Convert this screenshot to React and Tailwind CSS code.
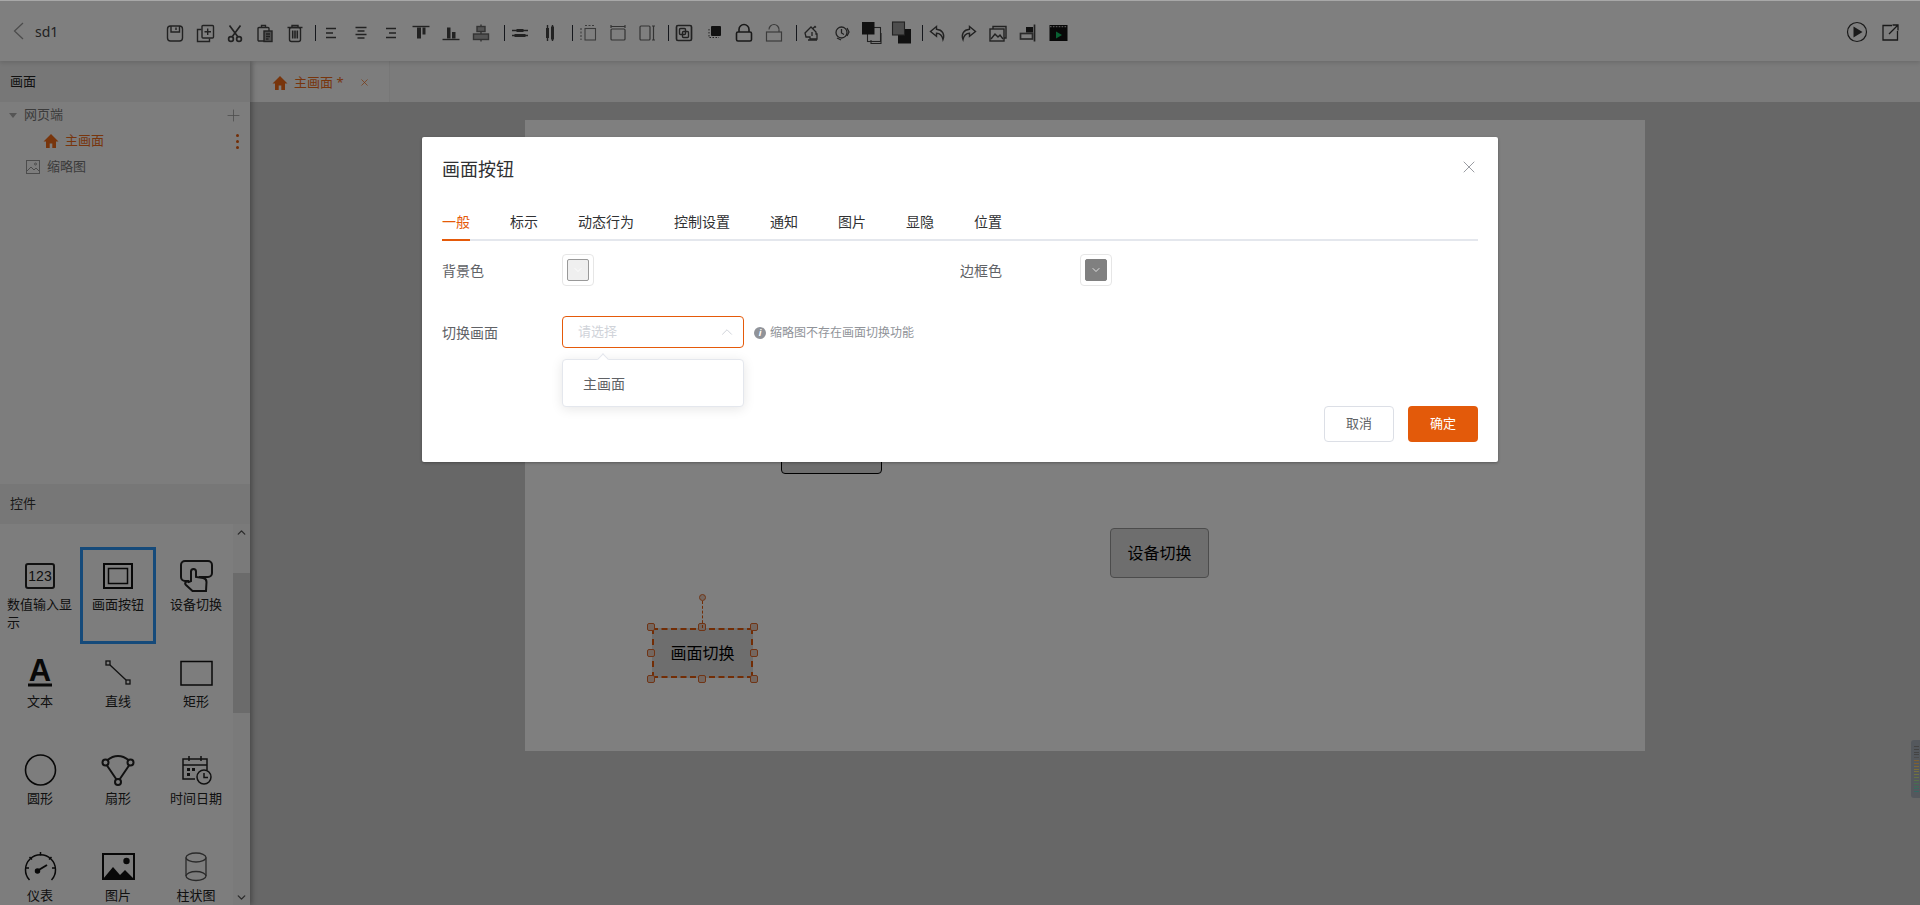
// Screen editor page with the 画面按钮 dialog open
import { ChevronUp, ChevronDown, Plus, X } from "lucide-react";

const S = ({ children, w = 20, h = 20, vb = "0 0 20 20", sw = 1.4, className = "" }) => (
  <svg width={w} height={h} viewBox={vb} fill="none" stroke="currentColor" strokeWidth={sw} className={className}>
    {children}
  </svg>
);

// toolbar drawings, left to right
const save = <S><rect x="2.5" y="3" width="15" height="15" rx="3" /><path d="M6 3v6h8.5V3M11 4.5v2.5" /></S>;
const copyAdd = <S><rect x="7" y="2.5" width="11.5" height="12.5" rx="1" /><path d="M12.7 5.5v6.5M9.5 8.8h6.5M6.5 6.5H2.5v12h12V15.500" /></S>;
const cut = <S sw={1.7}><circle cx="6" cy="16" r="2.4" /><circle cx="14" cy="16" r="2.4" /><path d="M4.500 2.500l8.500 11.500M15.500 2.500L7 14" /></S>;
const paste = <S><rect x="3" y="4.500" width="11" height="13.500" rx="1" /><path d="M6.500 4.500V2.500h4v2" /><rect x="9" y="8" width="8" height="10.500" fill="#9c9c9c" /><path d="M11 11h4M11 13.500h4M11 16h2.500" /></S>;
const trash = <S><path d="M2.500 4.500h15M7 4.500V2.500h6v2" /><rect x="4.500" y="4.500" width="11" height="14" rx="2" /><path d="M7.700 7.500v8M10 7.500v8M12.300 7.500v8" strokeWidth="1.600" /></S>;
const alignLeft = <S><path d="M5 5.500h10M5 10h7M5 14.500h10" /></S>;
const alignCenter = <S><path d="M4.500 4.500h11M6.500 8h7M4.500 11.500h11M6.500 15h7" /></S>;
const alignRight = <S><path d="M5 5.500h10M8 10h7M5 14.500h10" /></S>;
const alignTop = <S><path d="M1.500 3.500h17" /><path d="M6 4.500h4v11H6zM11.500 4.500h3v7h-3z" fill="currentColor" stroke="none" /></S>;
const alignBottom = <S><path d="M1.500 16.500h17" /><path d="M6 4.500h3.500v11H6zM11 9h3.500v6.500H11z" fill="currentColor" stroke="none" /></S>;
const alignMiddle = <S className="text-[#666]"><path d="M10 1.500v17" /><rect x="6" y="3.500" width="8" height="5" fill="#a8a8a8" /><rect x="2.500" y="11" width="15" height="5.500" fill="#a8a8a8" /></S>;
const distH = <S><path d="M2 7.500h16M2 12.500h16" /><path d="M6.500 6h7v3h-7zM4.500 11h11v3h-11z" fill="currentColor" stroke="none" /></S>;
const distV = <S><path d="M7.500 2v16M12.500 2v16" /><path d="M6 5h3v10H6zM11 3.500h3v13h-3z" fill="currentColor" stroke="none" /></S>;
const sizeBoth = <S sw={1.1} className="text-[#777]"><rect x="7" y="5.500" width="10.500" height="11.500" /><path d="M7 2.500h10M3 5v12" strokeDasharray="2 1.500" /></S>;
const sizeWidth = <S sw={1.2} className="text-[#666]"><rect x="3" y="6" width="14" height="11" rx="1" /><path d="M3 3.500h14M3 2v3M17 2v3" /></S>;
const sizeHeight = <S sw={1.2} className="text-[#666]"><rect x="2" y="3" width="10" height="14" rx="1" /><path d="M15.500 3v14M14 3h3M14 17h3" /></S>;
const group = <S><rect x="2.500" y="2.500" width="15" height="15" rx="1.500" strokeWidth="1.700" /><rect x="5.500" y="5.500" width="6" height="6" rx="1" /><rect x="8.500" y="8.500" width="6" height="6" rx="1" /></S>;
const ungroup = <S sw={1}><rect x="7" y="3" width="10" height="10" rx="1" fill="#222" stroke="none" /><path d="M5 6v8.500h10" strokeDasharray="1.500 1.500" /></S>;
const lock = <S sw={1.6} className="text-[#333]"><path d="M5 9V6.500a5 5 0 0 1 10 0V9" /><rect x="2.500" y="9" width="15" height="9" rx="1.500" /></S>;
const unlock = <S sw={1.2} className="text-[#777]"><path d="M5 6.500a5 5 0 0 1 10 0" /><path d="M15 6.500V9" /><rect x="2.500" y="9" width="15" height="9" /></S>;
const frontStep = <S sw={1.3}><path d="M3 10l6-6 5 5v2h1v5H8v-2H4z" /><path d="M11 5.500l2-2 1 1M6 17h9M10 9v4" /></S>;
const backStep = <S sw={1.3}><circle cx="9.500" cy="9.500" r="5.500" /><path d="M9.500 6v4l2.500 1.500M15 5l2 4-2 4M5 15l4 2" /></S>;
const toFront = <S sw={1.1} w={22} h={24} vb="0 0 22 24"><rect x="6.500" y="6.500" width="13" height="14" /><rect x="1" y="1" width="12.500" height="12.500" fill="#222" stroke="none" /><path d="M10 19v3.500h10V12" /></S>;
const toBack = <S sw={1.1} w={22} h={24} vb="0 0 22 24"><rect x="7" y="8" width="13" height="14.500" fill="#222" stroke="none" /><rect x="1.500" y="1" width="12" height="13" fill="#9c9c9c" /></S>;
const undo = <S><path d="M8.500 3.500L2.500 8.500l6 4.800v-3c3.500 0 5.500 1.500 6.500 6.200 2-5.200-.5-9.700-6.500-10.200z" /></S>;
const redo = <S><path d="M11.500 3.500l6 5-6 4.800v-3c-3.500 0-5.500 1.500-6.500 6.200-2-5.200.5-9.700 6.500-10.200z" /></S>;
const images = <S><rect x="2" y="6" width="14" height="12" /><path d="M5 6V3.500h13V15h-2M3 16l4-5 3 3 2-2 3 4" /></S>;
const dock = <S><path d="M16.500 1.500v17" strokeWidth="1.700" /><rect x="8" y="4" width="7" height="5.500" fill="#222" stroke="none" /><rect x="2.500" y="10.500" width="12" height="5.500" strokeWidth="1.700" className="text-[#555]" /></S>;
const clapper = (
  <svg width="19" height="18" viewBox="0 0 19 18">
    <rect x="0.500" y="1" width="18" height="16" fill="#111" />
    <path d="M1 2.600h17" stroke="#aaa" strokeWidth="1.100" strokeDasharray="1.600 1.300" />
    <path d="M7 7.500l6 3.500-6 3.500z" fill="#13c266" />
  </svg>
);

const toolbarGroups = [
  { gap: "", items: [save, copyAdd, cut, paste, trash] },
  { gap: "ml-[5px]", items: [alignLeft, alignCenter, alignRight, alignTop, alignBottom, alignMiddle] },
  { gap: "ml-[8px]", items: [distH, distV] },
  { gap: "ml-[7px]", items: [sizeBoth, sizeWidth, sizeHeight] },
  { gap: "ml-[5px]", items: [group, ungroup, lock, unlock] },
  { gap: "ml-[7px]", items: [frontStep, backStep, toFront, toBack] },
  { gap: "ml-[5px]", items: [undo, redo, images, dock, clapper] },
];

const HouseIcon = () => (
  <svg width="16" height="16" viewBox="0 0 16 16" fill="currentColor">
    <path d="M8 1L0.500 8.500H3V15h3.700v-4.500h2.600V15H13V8.500h2.500z" />
  </svg>
);

function Toolbar() {
  return (
    <div className="ml-[95px] mt-[3px] flex items-center">
      {toolbarGroups.map((g, i) => (
        <div key={i} className="flex items-center">
          {i > 0 && <span className={`h-4 w-px bg-[#2a2f38] ${g.gap}`} />}
          {g.items.map((icon, j) => (
            <span key={j} className="flex h-6 w-[30px] items-center justify-center text-[#444]">
              {icon}
            </span>
          ))}
        </div>
      ))}
    </div>
  );
}

function Header() {
  return (
    <header className="relative z-20 flex h-[60px] shrink-0 items-center bg-white pl-[13px] pr-[21px] shadow-[0_2px_4px_rgba(0,0,0,0.12)]">
      <svg width="11" height="18" viewBox="0 0 11 18" fill="none" stroke="#999" strokeWidth="1.300">
        <path d="M10 1L1.500 9l8.500 8" />
      </svg>
      <span className="ml-[11px] w-[30px] text-[14px] text-[#444]">sd1</span>
      <Toolbar />
      <div className="ml-auto mt-[2px] flex items-center gap-[14px] text-[#333]">
        <svg width="22" height="22" viewBox="0 0 22 22" fill="none" stroke="currentColor" strokeWidth="1.200">
          <circle cx="11" cy="11" r="9.500" />
          <path d="M7.500 5.500l9 5.500-9 5.500z" fill="currentColor" stroke="none" />
        </svg>
        <svg width="17" height="17" viewBox="0 0 17 17" fill="none" stroke="currentColor" strokeWidth="1.300">
          <path d="M10 1.500H1v14.500h14.500V7M7 10l9-9M10.500 1H16v5.500" />
        </svg>
      </div>
    </header>
  );
}

const widgets = [
  {
    label: "数值输入显示",
    icon: (
      <svg width="30" height="26" viewBox="0 0 30 26">
        <rect x="1" y="1" width="28" height="24" rx="2" fill="none" stroke="#222" strokeWidth="2" />
        <text x="15" y="18" textAnchor="middle" fontSize="14" fill="#222" fontFamily="Liberation Sans">123</text>
      </svg>
    ),
  },
  {
    label: "画面按钮",
    active: true,
    icon: (
      <svg width="30" height="26" viewBox="0 0 30 26" fill="none" stroke="#111">
        <rect x="1" y="1" width="28" height="24" strokeWidth="2" />
        <rect x="5.500" y="5.500" width="19" height="15" strokeWidth="1.500" />
      </svg>
    ),
  },
  {
    label: "设备切换",
    icon: (
      <svg width="33" height="32" viewBox="0 0 33 32" fill="none" stroke="#222" strokeWidth="2">
        <path d="M9 21H5a4 4 0 0 1-4-4V5a4 4 0 0 1 4-4h23a4 4 0 0 1 4 4v8a4 4 0 0 1-4 4h-9" />
        <path d="M11 21V11.500a2.500 2.500 0 0 1 5 0V17l7 1c2.500.4 3.500 2 3.500 4l-.5 9H12.500L6 25c-2-2 .5-4.500 2.500-3z" />
      </svg>
    ),
  },
  {
    label: "文本",
    icon: (
      <svg width="26" height="30" viewBox="0 0 26 30">
        <text x="13" y="23" textAnchor="middle" fontSize="31" fontWeight="700" fill="#111" fontFamily="Liberation Sans">A</text>
        <rect x="1" y="25.500" width="24" height="3" fill="#111" />
      </svg>
    ),
  },
  {
    label: "直线",
    icon: (
      <svg width="26" height="26" viewBox="0 0 26 26" fill="none" stroke="#222" strokeWidth="1.300">
        <rect x="1" y="1" width="4" height="4" />
        <rect x="21" y="20" width="4" height="4" />
        <path d="M5 5l16 15" />
      </svg>
    ),
  },
  {
    label: "矩形",
    icon: (
      <svg width="33" height="26" viewBox="0 0 33 26" fill="none" stroke="#111" strokeWidth="1.500">
        <rect x="1" y="1.500" width="31" height="23.500" />
      </svg>
    ),
  },
  {
    label: "圆形",
    icon: (
      <svg width="33" height="32" viewBox="0 0 33 32" fill="none" stroke="#111" strokeWidth="1.600">
        <circle cx="16.500" cy="16" r="15" />
      </svg>
    ),
  },
  {
    label: "扇形",
    icon: (
      <svg width="34" height="32" viewBox="0 0 34 32" fill="none" stroke="#222" strokeWidth="2">
        <circle cx="4.500" cy="8.500" r="3" />
        <circle cx="29.500" cy="8.500" r="3" />
        <circle cx="17" cy="28" r="3" />
        <path d="M6 11.500l9.500 14M28 11.500L18.500 25.500M6.500 6C13 .5 21 .5 27.500 6" />
      </svg>
    ),
  },
  {
    label: "时间日期",
    icon: (
      <svg width="31" height="30" viewBox="0 0 31 30" fill="none" stroke="#222" strokeWidth="1.500">
        <path d="M14 24H2V4h24v11M2 10h24M8 1v5M20 1v5" />
        <path d="M6 13h3v3H6zM11 13h3v3h-3zM6 18h3v3H6z" fill="#222" stroke="none" />
        <circle cx="23" cy="22" r="7" />
        <path d="M23 18v4.500h4" />
      </svg>
    ),
  },
  {
    label: "仪表",
    icon: (
      <svg width="33" height="32" viewBox="0 0 33 32" fill="none" stroke="#111" strokeWidth="1.500">
        <path d="M5.500 29a15 15 0 1 1 22 0" />
        <path d="M16.500 1v3.500M5.500 6l2.500 2.500M27.500 6L25 8.500M1.500 17H5M31.500 17H28" />
        <path d="M13 20l10-6" strokeWidth="2" />
        <circle cx="13.500" cy="20" r="2" fill="#111" />
      </svg>
    ),
  },
  {
    label: "图片",
    icon: (
      <svg width="33" height="28" viewBox="0 0 33 28">
        <rect x="1" y="1" width="31" height="25" fill="none" stroke="#111" strokeWidth="2" />
        <path d="M1 26l10-12 7 8 5-5 9 9z" fill="#111" />
        <circle cx="24.500" cy="8" r="3.200" fill="#111" />
      </svg>
    ),
  },
  {
    label: "柱状图",
    icon: (
      <svg width="22" height="30" viewBox="0 0 22 30" fill="none" stroke="#555" strokeWidth="1.300">
        <ellipse cx="11" cy="5.500" rx="10" ry="4.500" />
        <ellipse cx="11" cy="24" rx="10" ry="4.500" />
        <path d="M1 5.500V24M21 5.500V24" />
      </svg>
    ),
  },
];

function WidgetTile({ widget }) {
  return (
    <div
      className={`mx-px flex h-[97px] flex-col items-center ${
        widget.active ? "border-[3px] border-[#2a95f5] px-[2px] pt-[9px]" : "px-[5px] pt-[12px]"
      }`}
    >
      <div className="flex h-[34px] shrink-0 items-center justify-center">{widget.icon}</div>
      <div className="mt-[2px] text-[13px] leading-[18px] text-[#222]">{widget.label}</div>
    </div>
  );
}

function Sidebar() {
  return (
    <aside className="relative z-10 flex w-[250px] shrink-0 flex-col bg-[#fafafa] shadow-[2px_0_5px_rgba(0,0,0,0.3)]">
      <div className="flex h-[41px] shrink-0 items-center bg-[#eeeeee] pl-[10px] text-[13px] text-[#222]">画面</div>
      <div className="h-[382px] shrink-0 text-[13px] text-[#777]">
        <div className="flex h-[26px] items-center pl-[9px] pr-[7px]">
          <span className="h-0 w-0 border-x-[4px] border-t-[5px] border-x-transparent border-t-[#aaa]" />
          <span className="ml-[7px]">网页端</span>
          <Plus size={19} strokeWidth={1} className="ml-auto text-[#999]" />
        </div>
        <div className="flex h-[26px] items-center pl-[43px] pr-[11px] text-[#f06a18]">
          <HouseIcon />
          <span className="ml-[6px]">主画面</span>
          <span className="ml-auto flex flex-col gap-[3px]">
            <i className="h-[3px] w-[3px] rounded-full bg-[#e55a0a]" />
            <i className="h-[3px] w-[3px] rounded-full bg-[#e55a0a]" />
            <i className="h-[3px] w-[3px] rounded-full bg-[#e55a0a]" />
          </span>
        </div>
        <div className="flex h-[26px] items-center pl-[26px]">
          <svg width="14" height="14" viewBox="0 0 14 14" fill="none" stroke="#999" strokeWidth="1">
            <rect x="0.500" y="0.500" width="13" height="13" />
            <path d="M1 11l4-4 3 3 2-2 3 3" />
            <circle cx="9.500" cy="4" r="1" />
          </svg>
          <span className="ml-[7px]">缩略图</span>
        </div>
      </div>
      <div className="flex h-[40px] shrink-0 items-center bg-[#eeeeee] pl-[10px] text-[13px] text-[#333]">控件</div>
      <div className="flex min-h-0 flex-1">
        <div className="grid w-[233px] grid-cols-[repeat(3,78px)] content-start overflow-hidden pl-px pt-[23px]">
          {widgets.map((w) => (
            <WidgetTile key={w.label} widget={w} />
          ))}
        </div>
        <div className="relative w-[17px] bg-[#f4f4f4]">
          <ChevronUp size={13} strokeWidth={2.5} className="absolute left-[2px] top-[2px] text-[#555]" />
          <div className="absolute inset-x-0 top-[49px] h-[140px] bg-[#d6d6d6]" />
          <ChevronDown size={13} strokeWidth={2.5} className="absolute bottom-[1px] left-[2px] text-[#555]" />
        </div>
      </div>
    </aside>
  );
}

const handleSpots = [
  "-left-[5px] -top-[5px]",
  "left-[46px] -top-[5px]",
  "-right-[5px] -top-[5px]",
  "-left-[5px] top-[21px]",
  "-right-[5px] top-[21px]",
  "-left-[5px] -bottom-[5px]",
  "left-[46px] -bottom-[5px]",
  "-right-[5px] -bottom-[5px]",
];

function Canvas() {
  return (
    <div className="relative flex min-h-0 flex-1 justify-center bg-[#cecece] pt-[18px]">
      <div className="relative h-[631px] w-[1120px] bg-white">
        <div className="absolute left-[256px] top-[304px] h-[50px] w-[101px] rounded-[4px] border-[1.5px] border-black bg-[#dddddd]" />
        <div className="absolute left-[585px] top-[408px] flex h-[50px] w-[99px] items-center justify-center rounded-[4px] border-[1.5px] border-[#999] bg-[#dddddd] text-[16px] text-black">
          设备切换
        </div>
        <div className="absolute left-[127px] top-[508px] flex h-[50px] w-[101px] items-center justify-center rounded-[2px] bg-[#dddddd] text-[16px] text-black">
          画面切换
          <div className="absolute inset-0 border-2 border-dashed border-[#e55a0a]" />
          {handleSpots.map((spot) => (
            <span key={spot} className={`absolute h-[8px] w-[8px] rounded-[2px] border-[1.5px] border-[#e0692a] bg-[#e8cfc0] ${spot}`} />
          ))}
          <div className="absolute -top-[27px] left-[50px] h-[27px] border-l-[1.5px] border-dashed border-[#e55a0a]" />
          <span className="absolute -top-[34px] left-[47px] h-[7px] w-[7px] rounded-full border-[1.5px] border-[#e0692a] bg-[#e8cfc0]" />
        </div>
      </div>
      {/* floating meter at the window edge */}
      <div className="absolute right-0 top-[638px] flex h-[58px] w-[9px] flex-col gap-[2px] rounded-l-[3px] bg-[#a8b0ba] py-[6px] pl-[3px]">
        {["#888", "#888", "#888", "#888", "#999", "#fdc063", "#fdc063", "#fcd06a", "#f4dc70", "#f4e078", "#e0e480", "#c8e48a", "#b0e090", "#90dca0", "#7cd8b0", "#70d4c0", "#68d0c8"].map((c, i) => (
          <i key={i} className="h-px w-[5px]" style={{ backgroundColor: c }} />
        ))}
      </div>
    </div>
  );
}

function ColorSwatch({ dark }) {
  return (
    <div className="flex h-8 w-8 items-center justify-center rounded-[4px] border border-[#e6e6e6]">
      <div className={`flex h-[22px] w-[22px] items-center justify-center rounded-[2px] border ${dark ? "border-[#808080] bg-[#808080]" : "border-[#999] bg-[#efefef]"}`}>
        <ChevronDown size={12} strokeWidth={1.5} className="text-white" />
      </div>
    </div>
  );
}

const tabs = ["一般", "标示", "动态行为", "控制设置", "通知", "图片", "显隐", "位置"];

function Dialog() {
  return (
    <div className="relative mt-[136px] h-[325px] w-[1076px] rounded-[2px] bg-white px-5 shadow-[0_1px_3px_rgba(0,0,0,0.3)]">
      <div className="flex h-[64px] items-center justify-between">
        <span className="text-[18px] leading-none text-[#303133]">画面按钮</span>
        <X size={20} strokeWidth={1.1} className="-mr-px -mt-[4px] text-[#909399]" />
      </div>
      <div className="flex h-[40px] gap-10 border-b-2 border-[#e4e7ed] pt-[10px] text-[14px] leading-[22px] text-[#303133]">
        {tabs.map((t, i) => (
          <div key={t} className={`h-[30px] ${i === 0 ? "border-b-2 border-[#e55a0a] text-[#e55a0a]" : ""}`}>
            {t}
          </div>
        ))}
      </div>

      <div className="mt-[13px] flex h-8 items-center text-[14px] text-[#606266]">
        <span className="w-[120px]">背景色</span>
        <ColorSwatch />
        <span className="ml-[366px] w-[120px]">边框色</span>
        <ColorSwatch dark />
      </div>

      <div className="relative mt-[30px] flex h-8 items-center text-[14px] text-[#606266]">
        <span className="w-[120px]">切换画面</span>
        <div className="flex h-8 w-[182px] items-center justify-between rounded-[4px] border border-[#e55a0a] pl-[15px] pr-[7px] text-[13px] text-[#d0d3d9]">
          请选择
          <ChevronUp size={18} strokeWidth={1} className="text-[#c0c4cc]" />
        </div>
        <span className="ml-[10px] mt-px flex h-3 w-3 items-center justify-center rounded-full bg-[#909399] text-[9px] font-bold italic leading-none text-white">i</span>
        <span className="ml-1 mt-px text-[12px] text-[#909399]">缩略图不存在画面切换功能</span>

        <div className="absolute left-[120px] top-[43px] z-10 flex h-[48px] w-[182px] items-center rounded-[4px] border border-[#e4e7ed] bg-white pl-[20px] text-[14px] text-[#606266] shadow-[0_2px_12px_rgba(0,0,0,0.1)]">
          <span className="absolute -top-[5px] left-[36px] h-2 w-2 rotate-45 border-l border-t border-[#e4e7ed] bg-white" />
          主画面
        </div>
      </div>

      <div className="absolute bottom-5 right-5 flex gap-[14px] text-[13px]">
        <button className="h-9 w-[70px] rounded-[4px] border border-[#dcdfe6] bg-white text-[#606266]">取消</button>
        <button className="h-9 w-[70px] rounded-[4px] bg-[#e35a0a] text-white">确定</button>
      </div>
    </div>
  );
}

export default function App() {
  return (
    <div className="relative flex h-[905px] w-[1920px] flex-col overflow-hidden border-t border-[#a8a8a8] bg-white font-['Noto_Sans','Noto_Sans_CJK_SC',sans-serif]">
      <Header />
      <div className="flex min-h-0 flex-1">
        <Sidebar />
        <main className="flex min-w-0 flex-1 flex-col">
          <div className="flex h-[41px] shrink-0 bg-[#f6f6f6]">
            <div className="flex w-[140px] items-center border-r border-[#eeeeee] bg-[#fafafa] pl-[22px] pt-[2px] text-[13px] text-[#f06a18]">
              <HouseIcon />
              <span className="ml-[6px] w-[50px]">主画面 *</span>
              <X size={11} strokeWidth={1.5} className="ml-[15px]" />
            </div>
          </div>
          <Canvas />
        </main>
      </div>

      {/* dialog overlay */}
      <div className="absolute inset-0 z-30 flex justify-center bg-black/50">
        <Dialog />
      </div>
    </div>
  );
}
